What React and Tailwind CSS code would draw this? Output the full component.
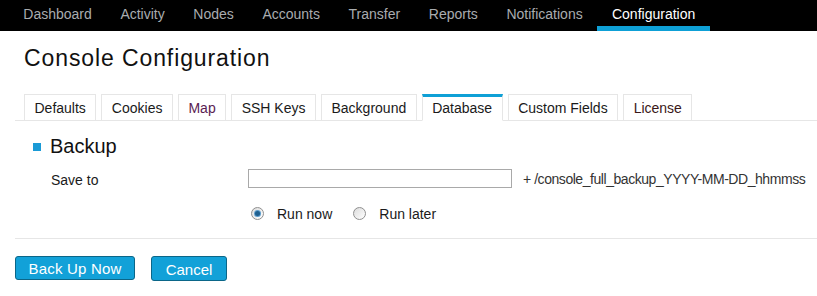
import React from "react";

const navItems = ["Dashboard", "Activity", "Nodes", "Accounts", "Transfer", "Reports", "Notifications", "Configuration"];

const tabs = [
  { label: "Defaults", color: "text-[#1a1a1a]" },
  { label: "Cookies", color: "text-[#1a1a1a]" },
  { label: "Map", color: "text-[#5a1d52]" },
  { label: "SSH Keys", color: "text-[#1a1a1a]" },
  { label: "Background", color: "text-[#1a1a1a]" },
  { label: "Database", color: "text-[#1a1a1a]", active: true },
  { label: "Custom Fields", color: "text-[#1a1a1a]" },
  { label: "License", color: "text-[#3a1818]" },
];

function Radio({ checked }) {
  return (
    <span className="relative flex h-[13px] w-[13px] items-center justify-center rounded-full border border-[#8f8f8f] bg-gradient-to-br from-[#dcdcdc] to-[#ffffff]">
      {checked && <span className="h-[5px] w-[5px] rounded-full bg-[#1f5f8f] shadow-[0_0_0_1px_#5b9ccc]" />}
    </span>
  );
}

export default function App() {
  return (
    <div className="h-[296px] w-[817px] overflow-hidden bg-white font-['Liberation_Sans',Arial,sans-serif]">
      <nav className="flex h-[31px] bg-black pl-[9px]">
        {navItems.map((item) => {
          const active = item === "Configuration";
          return (
            <div
              key={item}
              className={`box-border h-[31px] whitespace-nowrap px-[14.3px] pt-[6px] text-[14px] leading-[16px] ${
                active ? "border-b-[5px] border-[#0ea0d6] px-[15px] text-white" : "text-[#a9acaf]"
              }`}
            >
              {item}
            </div>
          );
        })}
      </nav>

      <div className="pl-[15px]">
        <h1 className="ml-[9px] mt-[15px] whitespace-nowrap text-[23px] leading-[25px] tracking-[0.9px] text-[#111]">
          Console Configuration
        </h1>

        <div className="mt-[23px] flex gap-[5px] border-b border-[#e6e6e6] pl-[9px]">
          {tabs.map((t) => (
            <div
              key={t.label}
              className={`-mb-px box-border flex h-[27px] items-center whitespace-nowrap px-[9.5px] text-[14px] leading-[16px] ${t.color} ${
                t.active
                  ? "border-x border-t-[3px] border-b border-[#e6e6e6] border-t-[#0ea0d6] border-b-white pb-[1px]"
                  : "border border-[#e6e6e6] pt-[1px]"
              }`}
            >
              {t.label}
            </div>
          ))}
        </div>

        <div className="ml-[18px] mt-[14px] flex items-center gap-[9px]">
          <span className="h-[8px] w-[8px] bg-[#1a9ad6]" />
          <span className="text-[20px] leading-[23px] text-[#111]">Backup</span>
        </div>

        <div className="mt-[11px] flex items-center whitespace-nowrap pl-[36px]">
          <span className="w-[197px] shrink-0 pt-[2px] text-[14px] leading-[16px] text-[#1a1a1a]">Save to</span>
          <div className="box-border h-[19px] w-[264px] shrink-0 border border-[#a9a9a9] bg-white" />
          <span className="ml-[11px] text-[14px] leading-[16px] tracking-[-0.45px] text-[#333]">
            + /console_full_backup_YYYY-MM-DD_hhmmss
          </span>
        </div>

        <div className="mt-[17px] flex items-center whitespace-nowrap pl-[236px] text-[14px] leading-[16px] text-[#1a1a1a]">
          <Radio checked />
          <span className="ml-[13px] pt-[1px]">Run now</span>
          <span className="ml-[21px]">
            <Radio />
          </span>
          <span className="ml-[13px] pt-[1px]">Run later</span>
        </div>

        <div className="mt-[16px] border-t border-[#e6e6e6]" />

        <div className="mt-[17px] flex gap-[16px]">
          <button className="box-border h-[24px] w-[120px] rounded-[3px] border border-[#0b6688] bg-[#12a1d8] text-[15px] leading-[17px] tracking-[0.2px] text-white">
            Back Up Now
          </button>
          <button className="box-border h-[25px] w-[76px] rounded-[3px] border border-[#0b6688] bg-[#12a1d8] pt-[1px] text-[15px] leading-[17px] text-white">
            Cancel
          </button>
        </div>
      </div>
    </div>
  );
}
